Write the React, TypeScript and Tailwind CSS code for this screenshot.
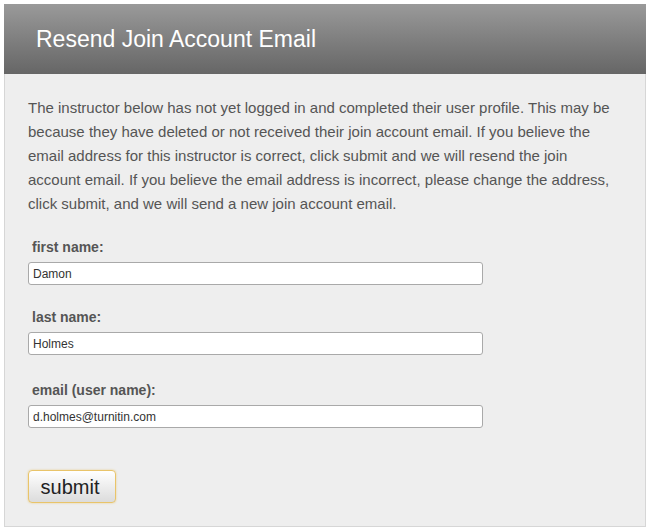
const FIELDS = [
  { label: 'first name:', value: 'Damon', mt: 'mt-[23px]' },
  { label: 'last name:', value: 'Holmes', mt: 'mt-[24px]' },
  { label: 'email (user name):', value: 'd.holmes@turnitin.com', mt: 'mt-[27px]' },
];

export default function App() {
  return (
    <div className="min-h-[532px] bg-white p-[4px] font-['Liberation_Sans',Arial,sans-serif]">
      <div className="border border-[#d6d6d6] bg-[#eeeeee] h-[523px] flex flex-col">
        {/* header */}
        <div className="h-[70px] -m-px mb-0 bg-gradient-to-b from-[#9a9a9a] to-[#666666] flex items-center pl-[32px]">
          <h1 className="text-[23px] text-white leading-none">Resend Join Account Email</h1>
        </div>

        <div className="pt-[22px] px-[23px]">
          <p className="text-[15px] leading-[24px] text-[#555555]">
            The instructor below has not yet logged in and completed their user profile. This may be
            because they have deleted or not received their join account email. If you believe the
            email address for this instructor is correct, click submit and we will resend the join
            account email. If you believe the email address is incorrect, please change the address,
            click submit, and we will send a new join account email.
          </p>

          <form onSubmit={(e) => e.preventDefault()}>
            {FIELDS.map((f) => (
              <div key={f.label} className={f.mt}>
                <label className="block pl-[4px] text-[14px] font-bold leading-[16px] text-[#555555]">
                  {f.label}
                </label>
                <input
                  type="text"
                  defaultValue={f.value}
                  className="mt-[7px] block w-[455px] h-[23px] px-[4px] text-[12px] text-[#333333] bg-white border border-[#a9a9a9] rounded-[3px] outline-none"
                />
              </div>
            ))}

            <button
              type="submit"
              className="block mt-[42px] w-[88px] h-[33px] pr-[4px] text-[20px] leading-none text-[#222222] border border-[#e9c46a] rounded-[4px] bg-gradient-to-b from-white to-[#dcdcdc] shadow-[0_0_2px_rgba(233,196,106,0.8)]"
            >
              submit
            </button>
          </form>
        </div>
      </div>
    </div>
  );
}
